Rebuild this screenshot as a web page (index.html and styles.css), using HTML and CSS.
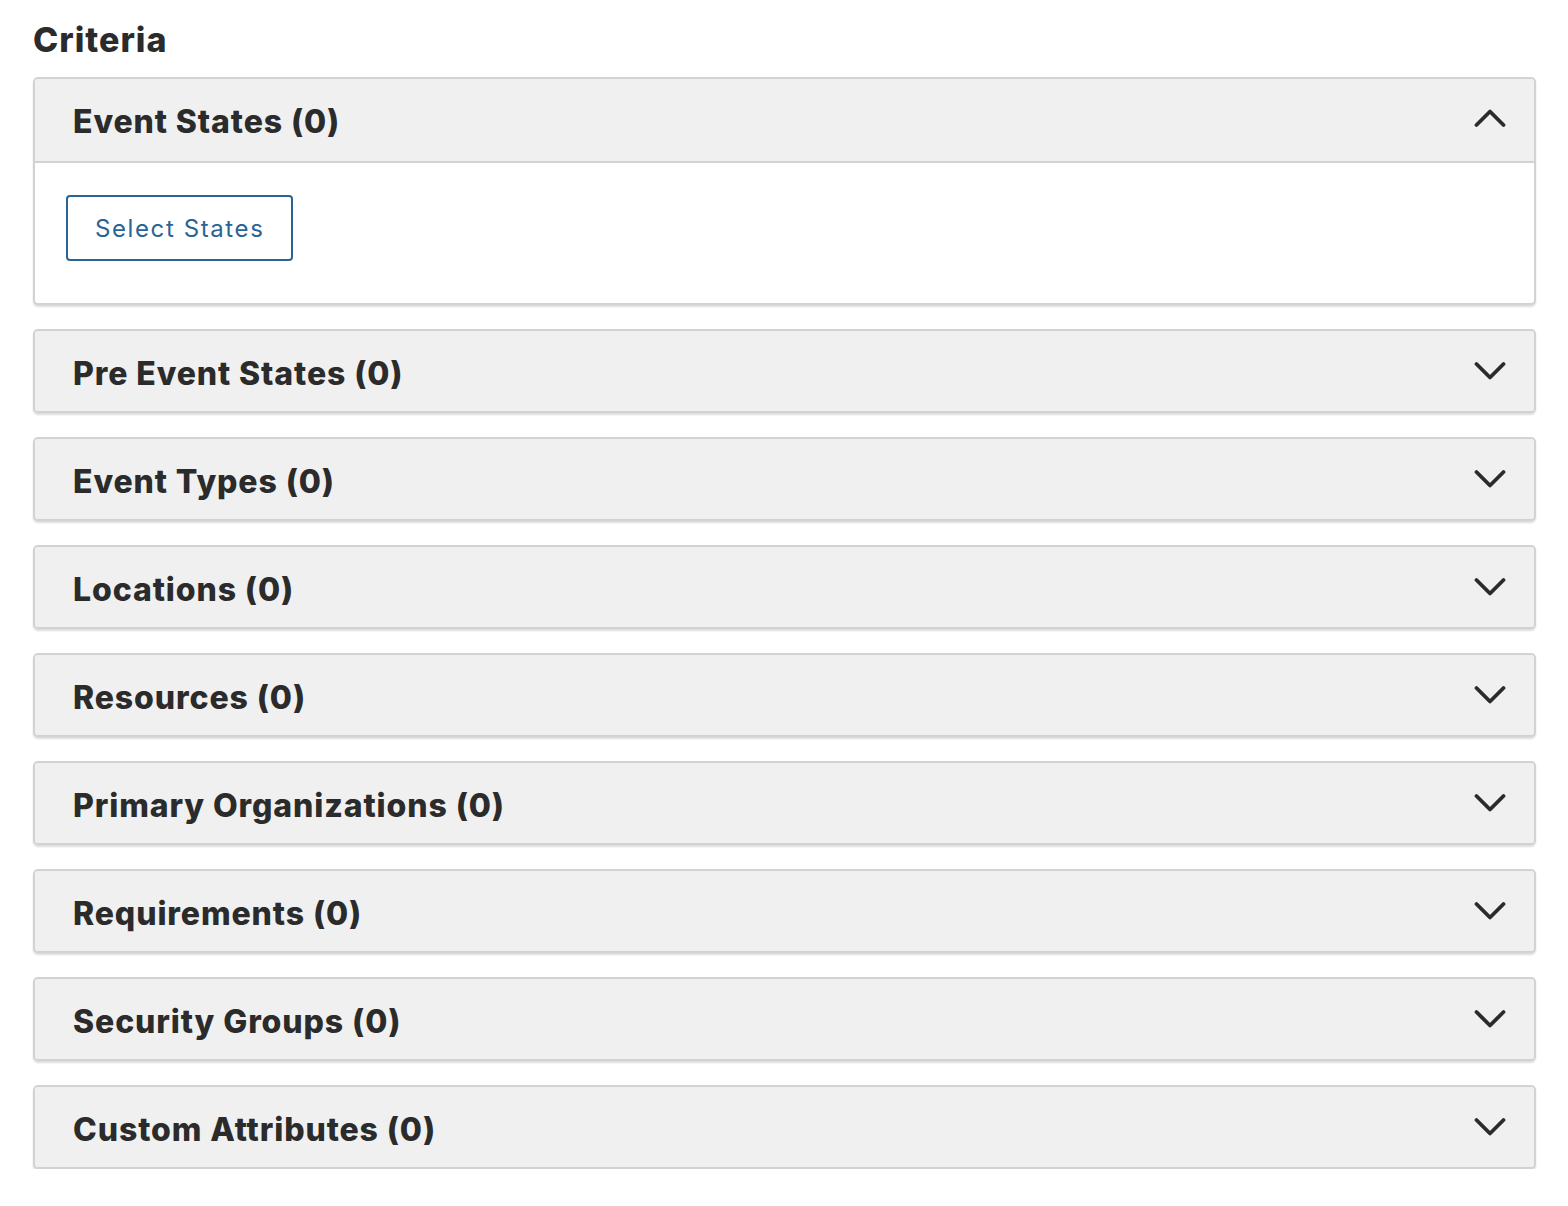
FILE: index.html
```html
<!DOCTYPE html>
<html>
<head>
<meta charset="utf-8">
<link rel="stylesheet" href="styles.css">
</head>
<body>
<div class="page">
  <h2 class="title">Criteria</h2>
  <div class="panels">
    <section class="panel open">
      <div class="panel-head">
        <span class="panel-title">Event States (0)</span>
        <svg class="chev" viewBox="0 0 32 20" width="32" height="20"><path d="M2.5 17 L16 3.5 L29.5 17" fill="none" stroke="#2b2b2b" stroke-width="3.8" stroke-linecap="round" stroke-linejoin="round"/></svg>
      </div>
      <div class="panel-body">
        <button class="btn">Select States</button>
      </div>
    </section>
    <section class="panel">
      <div class="panel-head">
        <span class="panel-title">Pre Event States (0)</span>
        <svg class="chev" viewBox="0 0 32 20" width="32" height="20"><path d="M2.5 3 L16 16.5 L29.5 3" fill="none" stroke="#2b2b2b" stroke-width="3.8" stroke-linecap="round" stroke-linejoin="round"/></svg>
      </div>
    </section>
    <section class="panel">
      <div class="panel-head">
        <span class="panel-title">Event Types (0)</span>
        <svg class="chev" viewBox="0 0 32 20" width="32" height="20"><path d="M2.5 3 L16 16.5 L29.5 3" fill="none" stroke="#2b2b2b" stroke-width="3.8" stroke-linecap="round" stroke-linejoin="round"/></svg>
      </div>
    </section>
    <section class="panel">
      <div class="panel-head">
        <span class="panel-title">Locations (0)</span>
        <svg class="chev" viewBox="0 0 32 20" width="32" height="20"><path d="M2.5 3 L16 16.5 L29.5 3" fill="none" stroke="#2b2b2b" stroke-width="3.8" stroke-linecap="round" stroke-linejoin="round"/></svg>
      </div>
    </section>
    <section class="panel">
      <div class="panel-head">
        <span class="panel-title">Resources (0)</span>
        <svg class="chev" viewBox="0 0 32 20" width="32" height="20"><path d="M2.5 3 L16 16.5 L29.5 3" fill="none" stroke="#2b2b2b" stroke-width="3.8" stroke-linecap="round" stroke-linejoin="round"/></svg>
      </div>
    </section>
    <section class="panel">
      <div class="panel-head">
        <span class="panel-title">Primary Organizations (0)</span>
        <svg class="chev" viewBox="0 0 32 20" width="32" height="20"><path d="M2.5 3 L16 16.5 L29.5 3" fill="none" stroke="#2b2b2b" stroke-width="3.8" stroke-linecap="round" stroke-linejoin="round"/></svg>
      </div>
    </section>
    <section class="panel">
      <div class="panel-head">
        <span class="panel-title">Requirements (0)</span>
        <svg class="chev" viewBox="0 0 32 20" width="32" height="20"><path d="M2.5 3 L16 16.5 L29.5 3" fill="none" stroke="#2b2b2b" stroke-width="3.8" stroke-linecap="round" stroke-linejoin="round"/></svg>
      </div>
    </section>
    <section class="panel">
      <div class="panel-head">
        <span class="panel-title">Security Groups (0)</span>
        <svg class="chev" viewBox="0 0 32 20" width="32" height="20"><path d="M2.5 3 L16 16.5 L29.5 3" fill="none" stroke="#2b2b2b" stroke-width="3.8" stroke-linecap="round" stroke-linejoin="round"/></svg>
      </div>
    </section>
    <section class="panel">
      <div class="panel-head">
        <span class="panel-title">Custom Attributes (0)</span>
        <svg class="chev" viewBox="0 0 32 20" width="32" height="20"><path d="M2.5 3 L16 16.5 L29.5 3" fill="none" stroke="#2b2b2b" stroke-width="3.8" stroke-linecap="round" stroke-linejoin="round"/></svg>
      </div>
    </section>
  </div>
</div>
</body>
</html>
```
FILE: styles.css
```css
* { box-sizing: border-box; }
html, body { margin: 0; padding: 0; background: #ffffff; }
body { font-family: "Inter", "Noto Sans", sans-serif; color: #2b2b2b; }
.page { padding: 18px 32px 0 33px; }
.title {
  margin: 0 0 15px 0;
  font-size: 34px;
  font-weight: 800;
  line-height: 44px;
  color: #2b2b2b;
  letter-spacing: 1px;
}
.panels { display: flex; flex-direction: column; gap: 24px; }
.panel {
  border: 2px solid #d2d2d2;
  border-radius: 5px;
  background: #f0f0f0;
  box-shadow: 0 2px 2px rgba(0,0,0,0.14);
  overflow: hidden;
}
.panel-head {
  height: 80px;
  display: flex;
  align-items: center;
  justify-content: space-between;
  padding: 0 28px 0 38px;
  background: #f0f0f0;
}
.panel-title {
  font-size: 32px;
  font-weight: 800;
  color: #2b2b2b;
  letter-spacing: 0.9px;
  margin-top: 4px;
}
.chev { display: block; margin-top: 0; }
.panel.open .panel-title { margin-top: 2px; }
.panel.open .chev { margin-top: -4px; }
.panel.open .panel-head { border-bottom: 2px solid #d2d2d2; height: 84px; }
.panel-body {
  background: #ffffff;
  padding: 32px 31px 42px 31px;
}
.btn {
  display: block;
  font-family: "Inter", "Noto Sans", sans-serif;
  font-size: 24px;
  letter-spacing: 1.6px;
  color: #2a6496;
  background: #ffffff;
  border: 2px solid #2a6496;
  border-radius: 4px;
  height: 66px;
  padding: 0 27px;
  cursor: pointer;
}
```
